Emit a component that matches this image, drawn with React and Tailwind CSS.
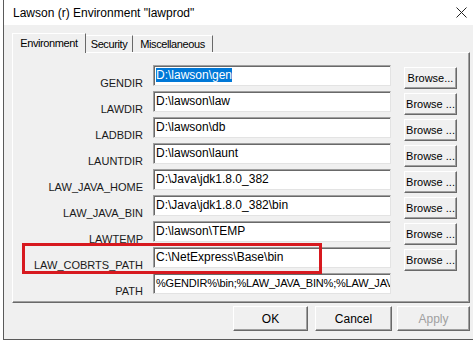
import React from "react";

const rows = [
  { label: "GENDIR", value: "D:\\lawson\\gen", selected: true, browse: "Browse..." },
  { label: "LAWDIR", value: "D:\\lawson\\law" },
  { label: "LADBDIR", value: "D:\\lawson\\db" },
  { label: "LAUNTDIR", value: "D:\\lawson\\launt" },
  { label: "LAW_JAVA_HOME", value: "D:\\Java\\jdk1.8.0_382" },
  { label: "LAW_JAVA_BIN", value: "D:\\Java\\jdk1.8.0_382\\bin" },
  { label: "LAWTEMP", value: "D:\\lawson\\TEMP" },
  { label: "LAW_COBRTS_PATH", value: "C:\\NetExpress\\Base\\bin" },
  { label: "PATH", value: "%GENDIR%\\bin;%LAW_JAVA_BIN%;%LAW_JAVA_HOME%\\bin", noBrowse: true },
];

const btn =
  "flex items-center justify-center bg-[#f0f0f0] border border-t-white border-l-white border-r-[#696969] border-b-[#696969] shadow-[inset_-1px_-1px_0_#a0a0a0]";

const EnvRow = ({ row }) => (
  <div className="flex h-[26px]">
    <div className="w-[130px] text-right text-[11px] text-[#1a1a1a] pt-[11px] leading-[14px]">
      {row.label}
    </div>
    <div
      className={`ml-[10px] w-[238px] h-[21px] bg-white border border-t-[#a0a0a0] border-l-[#a0a0a0] border-r-[#e3e3e3] border-b-[#e3e3e3] shadow-[inset_1px_1px_0_#696969] flex items-start pl-[2px] pt-[2px] overflow-hidden whitespace-nowrap leading-[14px] text-black ${
        row.noBrowse ? "text-[11px] tracking-[-0.2px]" : "text-[12px]"
      }`}
    >
      {row.selected ? (
        <span className="bg-[#0078d7] text-white">{row.value}</span>
      ) : (
        row.value
      )}
    </div>
    {!row.noBrowse && (
      <div className={`${btn} ml-[13px] mt-[2px] w-[53px] h-[22px] text-[11px] text-black`}>
        {row.browse || "Browse ..."}
      </div>
    )}
  </div>
);

const App = () => {
  return (
    <div
      className="w-[473px] h-[341px] bg-white pl-[3px] overflow-hidden"
      style={{ fontFamily: '"Liberation Sans", Arial, sans-serif' }}
    >
      <div className="h-[340px] w-[480px] border-l border-b border-[#5a5a5a] flex flex-col">
        {/* title bar */}
        <div className="h-[25px] bg-white flex items-center justify-between pl-[9px] pr-[16px]">
          <span className="text-[12px] text-black">Lawson (r) Environment "lawprod"</span>
          <svg width="11" height="11" viewBox="0 0 11 11">
            <path d="M0.5 0.5 L10.5 10.5 M10.5 0.5 L0.5 10.5" stroke="#222" strokeWidth="1" />
          </svg>
        </div>

        <div className="flex-1 bg-[#f0f0f0] pl-[8px] pt-[8px]">
          {/* tabs */}
          <div className="flex items-end h-[19px] relative z-10">
            <div className="h-[20px] w-[74px] bg-[#f0f0f0] border-t border-l border-white border-r border-r-[#696969] flex items-center justify-center text-[11px] tracking-[-0.4px] text-black mb-[-1px]">
              Environment
            </div>
            <div className="h-[17px] w-[47px] border-t border-white border-r border-r-[#696969] flex items-center justify-center text-[11px] tracking-[-0.4px] text-black">
              Security
            </div>
            <div className="h-[17px] w-[80px] border-t border-white border-r border-r-[#696969] flex items-center justify-center text-[11px] tracking-[-0.4px] text-black">
              Miscellaneous
            </div>
          </div>

          {/* panel */}
          <div className="relative w-[458px] h-[251px] border border-t-white border-l-white border-r-[#696969] border-b-[#696969] shadow-[inset_-1px_-1px_0_#a0a0a0] pt-[12px]">
            {rows.map((row) => (
              <EnvRow key={row.label} row={row} />
            ))}
            <div className="absolute left-[9px] top-[190px] w-[300px] h-[31px] border-[3px] border-[#d7191f]" />
          </div>

          {/* dialog buttons */}
          <div className="flex mt-[3px] ml-[221px] h-[25px]">
            <div className={`${btn} w-[75px] text-[12px] text-black`}>OK</div>
            <div className={`${btn} w-[77px] ml-[7px] text-[12px] text-black`}>Cancel</div>
            <div className={`${btn} w-[73px] ml-[5px] text-[12px] text-[#a0a0a0]`}>Apply</div>
          </div>
        </div>
      </div>
    </div>
  );
};

export default App;
